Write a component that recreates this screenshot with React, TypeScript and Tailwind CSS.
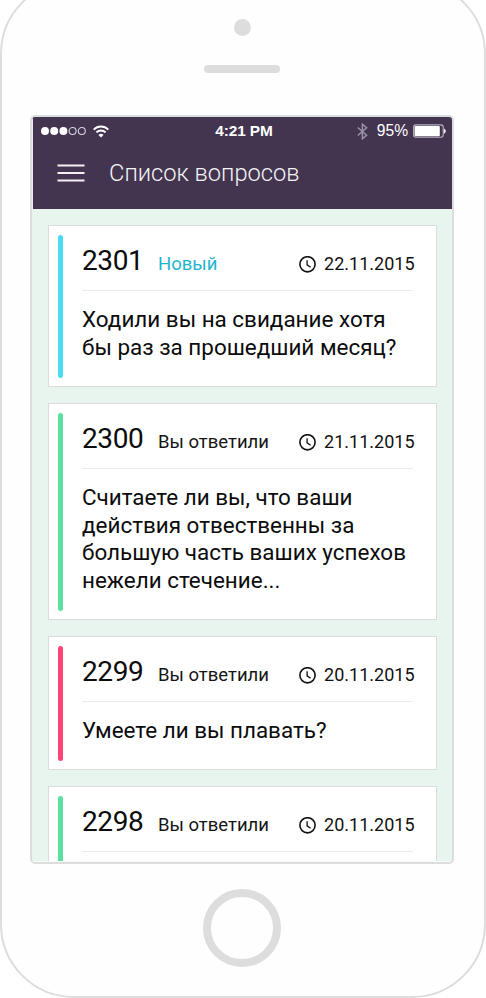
type Question = {
  id: string;
  status: string;
  statusClass: string;
  barClass: string;
  date: string;
  lines: string[];
};

const questions: Question[] = [
  {
    id: "2301",
    status: "Новый",
    statusClass: "text-[#1fb5d0]",
    barClass: "bg-[#4adcf2]",
    date: "22.11.2015",
    lines: ["Ходили вы на свидание хотя", "бы раз за прошедший месяц?"],
  },
  {
    id: "2300",
    status: "Вы ответили",
    statusClass: "text-[#151515]",
    barClass: "bg-[#5ce09d]",
    date: "21.11.2015",
    lines: [
      "Считаете ли вы, что ваши",
      "действия отвественны за",
      "большую часть ваших успехов",
      "нежели стечение...",
    ],
  },
  {
    id: "2299",
    status: "Вы ответили",
    statusClass: "text-[#151515]",
    barClass: "bg-[#ff4377]",
    date: "20.11.2015",
    lines: ["Умеете ли вы плавать?"],
  },
  {
    id: "2298",
    status: "Вы ответили",
    statusClass: "text-[#151515]",
    barClass: "bg-[#5ce09d]",
    date: "20.11.2015",
    lines: [],
  },
];

function ClockIcon() {
  return (
    <svg className="mr-[8px] h-[17px] w-[17px] shrink-0" viewBox="0 0 17 17" fill="none" stroke="#111">
      <circle cx="8.5" cy="8.3" r="7.6" strokeWidth="1.6" />
      <path d="M8.1 4.2V8.9L11.6 11.2" strokeWidth="1.3" />
    </svg>
  );
}

function StatusBar() {
  return (
    <div className="flex h-[28px] items-center pl-[8px] pr-[6px] text-white">
      <div className="flex flex-1 items-center">
        <svg className="h-[10px] w-[46px]" viewBox="0 0 46 10">
          <circle cx="4" cy="5" r="4" fill="#fff" />
          <circle cx="13.2" cy="5" r="4" fill="#fff" />
          <circle cx="22.4" cy="5" r="4" fill="#fff" />
          <circle cx="31.6" cy="5" r="3.5" fill="none" stroke="#d9d5df" strokeWidth="1.1" />
          <circle cx="40.8" cy="5" r="3.5" fill="none" stroke="#d9d5df" strokeWidth="1.1" />
        </svg>
        <svg className="ml-[6px] h-[13px] w-[16px]" viewBox="0 0 16 13" fill="none" stroke="#fff" strokeWidth="1.9">
          <path d="M0.7 4.6C4.7 0.4 11.3 0.4 15.3 4.6" />
          <path d="M3.4 7.4C6 4.8 10 4.8 12.6 7.4" />
          <path d="M8 12.6L5.5 9.9C6.9 8.5 9.1 8.5 10.5 9.9Z" fill="#fff" stroke="none" />
        </svg>
      </div>
      <div className="ml-px whitespace-nowrap font-['Liberation_Sans',sans-serif] text-[15.4px] font-bold leading-[18px] tracking-[-0.1px]">
        4:21 PM
      </div>
      <div className="flex flex-1 items-center justify-end">
        <svg className="mr-[9px] h-[17px] w-[11px]" viewBox="0 0 11 17" fill="none" stroke="#9a91a3" strokeWidth="1.5">
          <path d="M0.8 4.5L9.6 12.3L5.4 15.8V1.2L9.6 4.7L0.8 12.5" />
        </svg>
        <span className="font-['Liberation_Sans',sans-serif] text-[15.6px] leading-[18px]">95%</span>
        <svg className="ml-[5px] h-[14px] w-[33px]" viewBox="0 0 33 14">
          <rect x="0.6" y="0.9" width="29.6" height="12.4" rx="2.2" fill="none" stroke="#b9b3c0" strokeWidth="1.1" />
          <rect x="1.6" y="1.9" width="25.2" height="10.4" rx="1" fill="#fff" />
          <path d="M31.2 4.9C32.9 5.6 32.9 8.6 31.2 9.3Z" fill="#fff" stroke="#fff" strokeWidth="0.6" />
        </svg>
      </div>
    </div>
  );
}

function QuestionCard({ q }: { q: Question }) {
  return (
    <article className="flex shrink-0 border border-[#dadddb] bg-white pb-[8px] pl-[8.5px] pr-[23.5px] pt-[9px]">
      <div className={`w-[5px] shrink-0 rounded-full ${q.barClass}`} />
      <div className="ml-[19.5px] flex-1 pb-[16.3px]">
        <div className="flex h-[56px] items-end border-b border-[#ebebeb] pb-[12px]">
          <span className="w-[76px] text-[28px] leading-[34px] tracking-[-0.4px] text-[#0c0c0c]">{q.id}</span>
          <span className={`mb-px flex-1 whitespace-nowrap text-[18.5px] leading-[26px] ${q.statusClass}`}>{q.status}</span>
          <span className="-mr-[2px] mb-px flex items-center whitespace-nowrap text-[18px] leading-[26px] text-[#111]">
            <ClockIcon />
            {q.date}
          </span>
        </div>
        <p className="mt-[15px] min-h-[27.7px] whitespace-nowrap text-[22.45px] leading-[27.7px] text-[#0c0c0c]">
          {q.lines.map((line) => (
            <span key={line} className="block">
              {line}
            </span>
          ))}
        </p>
      </div>
    </article>
  );
}

export default function App() {
  return (
    <div className="h-[998px] w-[486px] overflow-hidden bg-white font-[Roboto,sans-serif]">
      <div className="-mt-[20px] flex h-[1018px] w-[486px] flex-col items-center rounded-[74px] border-2 border-[#dddddd] bg-[#fefefe] pr-[2px]">
        <div className="mt-[37px] h-[17px] w-[17px] rounded-full bg-[#dddddd]" />
        <div className="mt-[28.5px] h-[8.5px] w-[76px] rounded-full bg-[#dddddd]" />
        <div className="mt-[42px] flex h-[749px] w-[424px] shrink-0 flex-col overflow-hidden rounded-[5px] border-2 border-[#dcdddd] bg-[#e8f5ef]">
          <header className="h-[92px] shrink-0 border-l border-[#eceaee] bg-[#433550]">
            <StatusBar />
            <div className="flex h-[56px] items-center pl-[24px]">
              <svg className="h-[20px] w-[28px]" viewBox="0 0 28 20" stroke="#f3f1f4" strokeWidth="2">
                <path d="M0.5 2.5H27.5M0.5 10H27.5M0.5 17.5H27.5" />
              </svg>
              <h1 className="ml-[24px] whitespace-nowrap text-[23.7px] font-light leading-[30px] text-[#f5f3f6]">
                Список вопросов
              </h1>
            </div>
          </header>
          <main className="flex min-h-0 flex-1 flex-col gap-4 overflow-hidden border-b border-[#fafafa] pl-[16px] pr-[15px] pt-[16.3px]">
            {questions.map((q) => (
              <QuestionCard key={q.id} q={q} />
            ))}
          </main>
        </div>
        <div className="mt-[25px] h-[78px] w-[78px] shrink-0 rounded-full border-[8.5px] border-[#dddddd]" />
      </div>
    </div>
  );
}
